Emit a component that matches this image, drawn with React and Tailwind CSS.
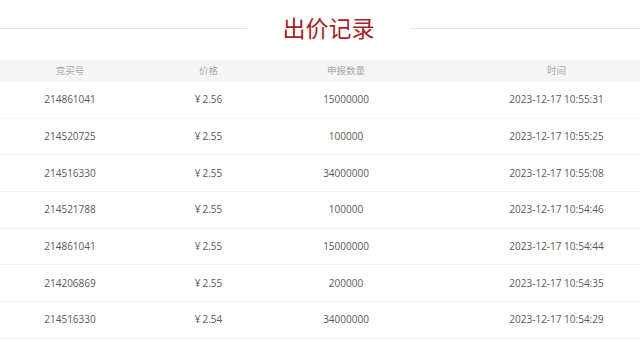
import React from "react";

const rows = [
  ["214861041", "2.56", "15000000", "2023-12-17 10:55:31"],
  ["214520725", "2.55", "100000", "2023-12-17 10:55:25"],
  ["214516330", "2.55", "34000000", "2023-12-17 10:55:08"],
  ["214521788", "2.55", "100000", "2023-12-17 10:54:46"],
  ["214861041", "2.55", "15000000", "2023-12-17 10:54:44"],
  ["214206869", "2.55", "200000", "2023-12-17 10:54:35"],
  ["214516330", "2.54", "34000000", "2023-12-17 10:54:29"],
];

const font = { fontFamily: "'Open Sans', 'Noto Sans CJK SC', sans-serif" };

export default function App() {
  return (
    <div
      className="w-[640px] h-[342px] overflow-hidden bg-white"
      style={font}
    >
      {/* title */}
      <div className="flex items-center h-[56px]">
        <div className="w-[247px] h-px bg-[#e3e3e3]"></div>
        <div className="w-[163px] text-center text-[23px] leading-none text-[#a61f29] font-['Noto_Sans_CJK_SC',sans-serif] -mt-[1px]">
          出价记录
        </div>
        <div className="flex-1 h-px bg-[#e3e3e3]"></div>
      </div>

      <div className="mt-[4px] w-[698px]">
        <div className="grid grid-cols-[140px_137px_138px_283px] h-[22px] items-center bg-[#f5f5f5] text-[9.5px] text-[#aaaaaa] text-center">
          <div>竞买号</div>
          <div>价格</div>
          <div>申报数量</div>
          <div>时间</div>
        </div>
        {rows.map((r, i) => (
          <div
            key={i}
            className="grid grid-cols-[140px_137px_138px_283px] h-[36.7px] items-center border-b border-[#f0f0f0] text-[10px] text-[#595959] text-center"
          >
            <div>{r[0]}</div>
            <div>
              <span className="mr-[2px]">¥</span>
              {r[1]}
            </div>
            <div>{r[2]}</div>
            <div>{r[3]}</div>
          </div>
        ))}
      </div>
    </div>
  );
}
